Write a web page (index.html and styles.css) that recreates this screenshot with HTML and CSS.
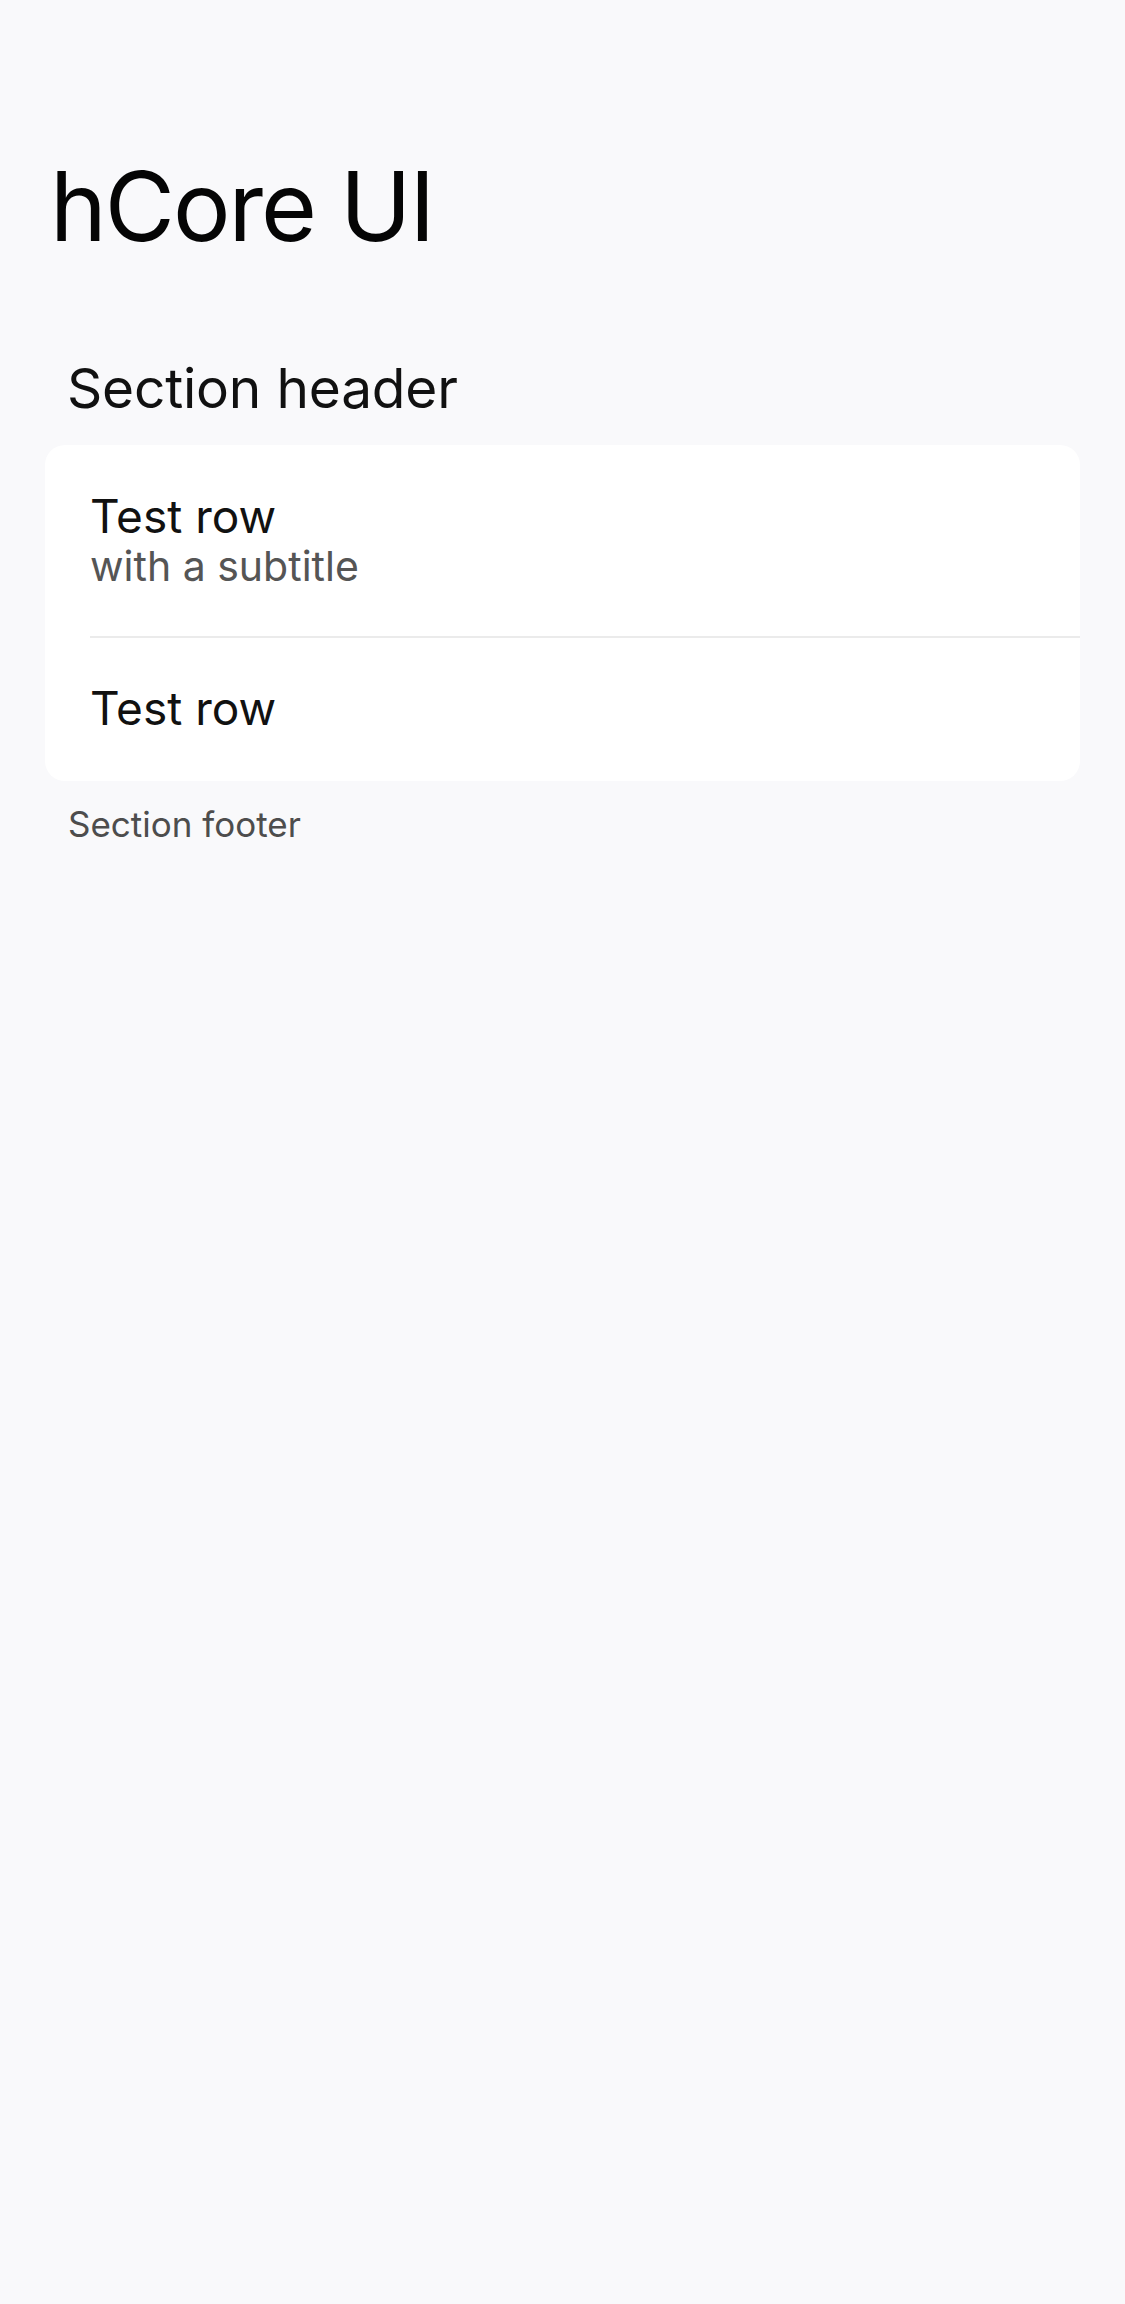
FILE: index.html
```html
<!DOCTYPE html>
<html lang="en">
<head>
<meta charset="utf-8">
<title>hCore UI</title>
<link rel="stylesheet" href="styles.css">
</head>
<body>
  <main class="screen">
    <h1 class="page-title">hCore UI</h1>
    <section class="section">
      <h2 class="section-header">Section header</h2>
      <div class="card">
        <div class="row row-two-line">
          <div class="row-title">Test row</div>
          <div class="row-subtitle">with a subtitle</div>
        </div>
        <div class="divider"></div>
        <div class="row row-one-line">
          <div class="row-title">Test row</div>
        </div>
      </div>
      <p class="section-footer">Section footer</p>
    </section>
  </main>
</body>
</html>
```

FILE: styles.css
```css
html, body {
  margin: 0;
  padding: 0;
  background: #f9f9fb;
}

body {
  font-family: Inter, "Liberation Sans", Arial, sans-serif;
  color: #0d0d0d;
  min-height: 2304px;
}

.screen {
  padding-top: 158px;
}

.page-title {
  margin: 0;
  padding-left: 50px;
  font-size: 96px;
  line-height: 96px;
  font-weight: 400;
  letter-spacing: -2px;
  color: #050505;
}

.section {
  margin-top: 107px;
}

.section-header {
  margin: 0 0 29px;
  padding-left: 67px;
  font-size: 55px;
  line-height: 55px;
  font-weight: 400;
  letter-spacing: -0.2px;
  color: #111;
}

.card {
  margin: 0 45px;
  background: #ffffff;
  border-radius: 20px;
}

.row {
  padding-left: 45px;
}

.row-two-line {
  padding-top: 48px;
  padding-bottom: 49px;
}

.row-one-line {
  padding-top: 47px;
  padding-bottom: 50px;
}

.row-title {
  font-size: 46px;
  line-height: 46px;
  color: #111;
}

.row-subtitle {
  margin-top: 7px;
  font-size: 41px;
  line-height: 41px;
  color: #555;
}

.divider {
  margin-left: 45px;
  height: 2px;
  background: #ebebeb;
}

.section-footer {
  margin: 26px 0 0;
  padding-left: 68px;
  font-size: 35px;
  line-height: 35px;
  color: #4d4d4d;
}
```
